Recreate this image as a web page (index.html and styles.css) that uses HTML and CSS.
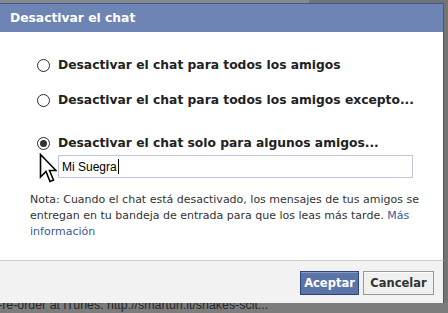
FILE: index.html
```html
<!DOCTYPE html>
<html lang="es">
<head>
<meta charset="utf-8">
<title>Desactivar el chat</title>
<link rel="stylesheet" href="styles.css">
</head>
<body>
<div class="page">
  <div class="page-top"><span class="page-top-light"></span></div>
  <div class="page-spacer"></div>
  <div class="page-bottom">-re-order at iTunes: http://smarturl.it/shakes-scit...</div>
</div>

<div class="dialog">
  <div class="dialog-header">Desactivar el chat</div>
  <div class="dialog-body">
    <div class="option option-first">
      <span class="radio"></span>
      <span class="option-label">Desactivar el chat para todos los amigos</span>
    </div>
    <div class="option option-second">
      <span class="radio"></span>
      <span class="option-label">Desactivar el chat para todos los amigos excepto...</span>
    </div>
    <div class="option option-third">
      <span class="radio radio-checked"></span>
      <span class="option-label">Desactivar el chat solo para algunos amigos...</span>
    </div>
    <div class="friend-input">Mi Suegra<span class="caret"></span></div>
    <p class="note">Nota: Cuando el chat está desactivado, los mensajes de tus amigos se entregan en tu bandeja de entrada para que los leas más tarde. <a class="note-link" href="#">Más información</a></p>
  </div>
  <div class="dialog-footer">
    <button class="btn btn-primary">Aceptar</button>
    <button class="btn btn-secondary">Cancelar</button>
  </div>
</div>

<svg class="cursor" width="18" height="32" viewBox="0 0 18 32">
  <path d="M1.5 1.5 L1.5 24 L7 18.5 L11 28.5 L14.5 27 L10.5 17.5 L17 17.5 Z" fill="#fff" stroke="#000" stroke-width="1.6" stroke-linejoin="miter"/>
</svg>
</body>
</html>
```

FILE: styles.css
```css
html, body {
  margin: 0;
  padding: 0;
}

body {
  width: 448px;
  height: 313px;
  overflow: hidden;
  position: relative;
  background: #747474;
  font-family: "DejaVu Sans", sans-serif;
}

.page {
  display: flex;
  flex-direction: column;
  height: 313px;
}

.page-top {
  height: 3px;
  display: flex;
}

.page-top-light {
  width: 309px;
  background: #8a8a8a;
}

.page-spacer {
  flex: 1;
}

.page-bottom {
  height: 11px;
  background: #7c7c7c;
  color: #262626;
  font-family: "Liberation Sans", Arial, sans-serif;
  font-size: 12.4px;
  line-height: 6px;
  white-space: nowrap;
  overflow: hidden;
  margin-left: -2px;
}

.dialog {
  position: absolute;
  left: 0;
  top: 3px;
  width: 444px;
  display: flex;
  flex-direction: column;
}

.dialog-header {
  box-sizing: border-box;
  height: 29px;
  background: #6d84b4;
  border-top: 1px solid #3b5998;
  border-right: 1px solid #3b5998;
  color: #fff;
  font-weight: bold;
  font-size: 12.3px;
  line-height: 28px;
  padding-left: 10px;
}

.dialog-body {
  box-sizing: border-box;
  height: 228px;
  background: #fff;
  border-right: 1px solid #555;
  padding: 23px 0 0 30px;
  display: flex;
  flex-direction: column;
  align-items: flex-start;
}

.option {
  height: 20px;
  display: flex;
  align-items: center;
  padding-left: 7px;
}

.option-second {
  margin-top: 15px;
}

.option-third {
  margin-top: 23px;
}

.radio {
  box-sizing: border-box;
  width: 13px;
  height: 13px;
  border-radius: 50%;
  border: 1.2px solid #2a2a2a;
  background: #fff;
  display: flex;
  align-items: center;
  justify-content: center;
  margin-right: 8px;
}

.radio-checked::after {
  content: "";
  width: 7px;
  height: 7px;
  border-radius: 50%;
  background: #333;
}

.option-label {
  font-weight: bold;
  font-size: 12.3px;
  color: #222;
  white-space: nowrap;
}

.friend-input {
  box-sizing: border-box;
  margin: 2px 0 0 28px;
  width: 355px;
  height: 23px;
  border: 1px solid #bdc7d8;
  background: #fff;
  padding-left: 3px;
  font-family: "Liberation Sans", Arial, sans-serif;
  font-size: 12px;
  color: #000;
  display: flex;
  align-items: center;
}

.caret {
  width: 1px;
  height: 15px;
  background: #000;
  margin-left: 1px;
}

.note {
  margin: 14px 0 0 0;
  width: 396px;
  font-size: 11px;
  line-height: 16px;
  color: #333;
}

.note-link {
  color: #3b5998;
  text-decoration: none;
}

.dialog-footer {
  box-sizing: border-box;
  height: 43px;
  background: #f2f2f2;
  border-top: 1px solid #ccc;
  border-right: 1px solid #555;
  padding: 10px 9px 0 0;
  display: flex;
  justify-content: flex-end;
  align-items: flex-start;
  gap: 4px;
}

.btn {
  box-sizing: border-box;
  height: 24px;
  padding: 0;
  font-family: "DejaVu Sans", sans-serif;
  font-weight: bold;
  font-size: 11.5px;
  text-align: center;
  cursor: default;
}

.btn-primary {
  width: 59px;
  background: #5b74a8;
  border: 1px solid #29447e;
  box-shadow: inset 0 1px 0 #8a9cc2;
  color: #fff;
}

.btn-secondary {
  width: 71px;
  background: #f0f0f0;
  border: 1px solid #999;
  box-shadow: inset 0 1px 0 #fff;
  color: #333;
}

.cursor {
  position: absolute;
  left: 39px;
  top: 153px;
}
```
